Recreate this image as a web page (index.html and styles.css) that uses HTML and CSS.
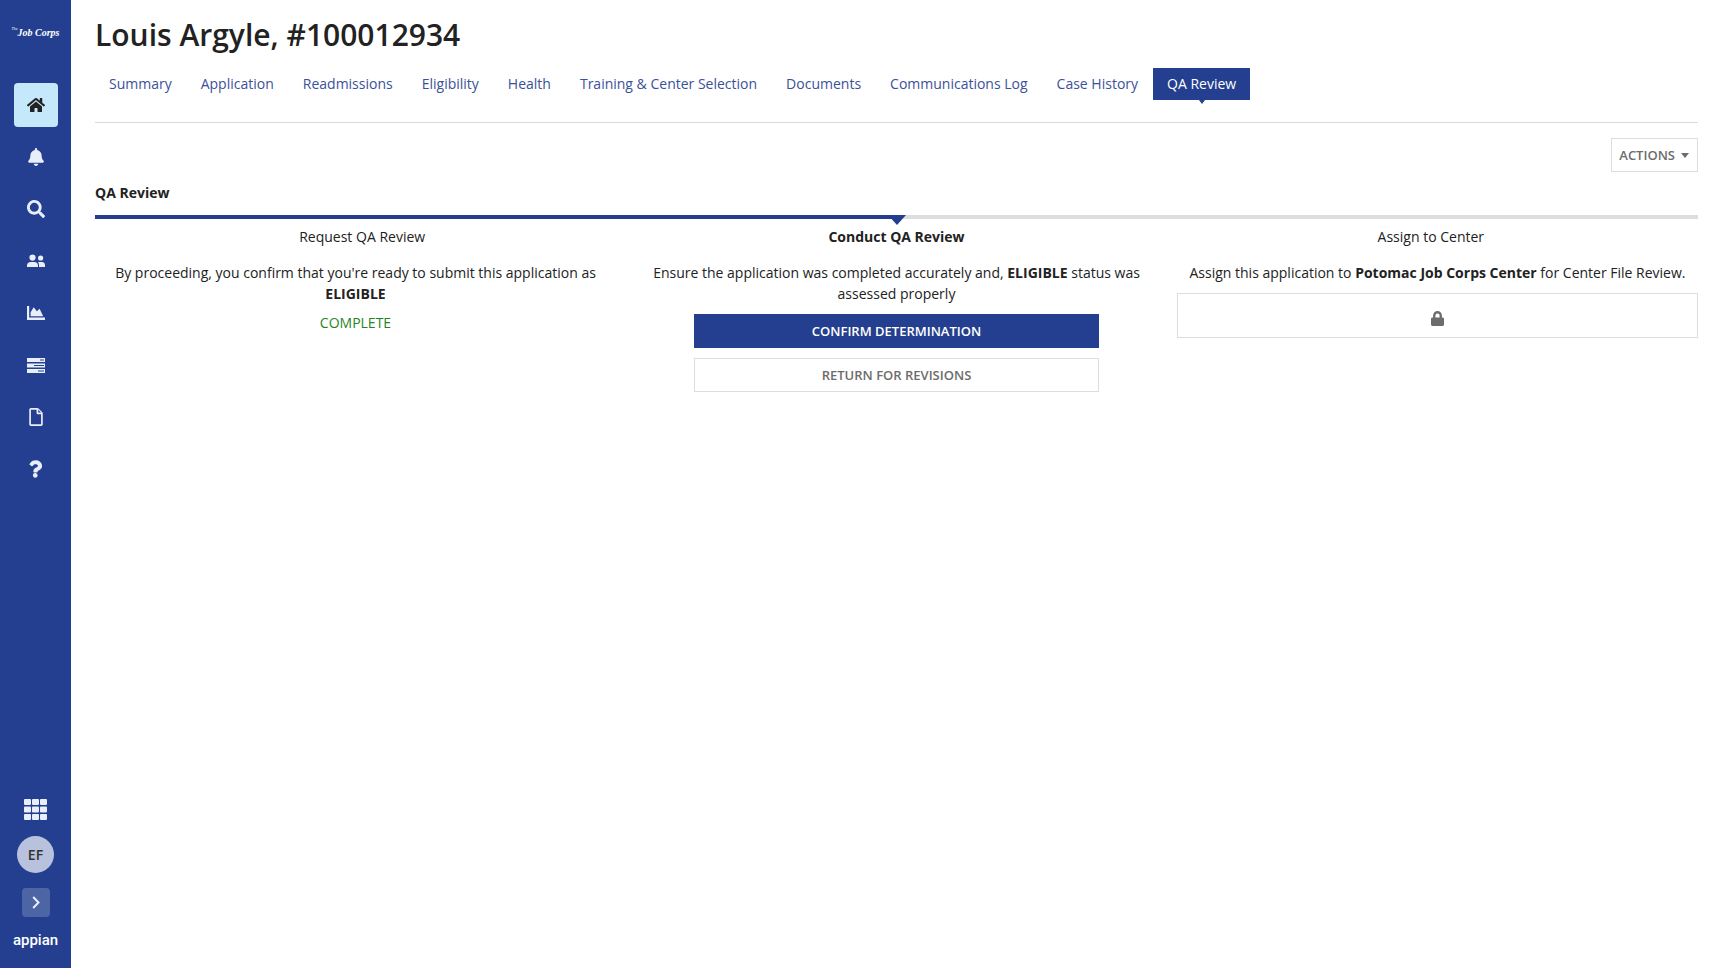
FILE: index.html
```html
<!DOCTYPE html>
<html lang="en">
<head>
  <meta charset="UTF-8">
  <meta name="viewport" content="width=device-width, initial-scale=1.0">
  <title>Louis Argyle, #100012934</title>
  <link rel="stylesheet" href="styles.css">
</head>
<body>
  <!-- Sidebar -->
  <aside class="sidebar">
    <a class="logo" href="#"><span class="logo-the">The</span>Job Corps</a>

    <nav class="side-nav" aria-label="Site">
      <a class="side-link active" href="#" aria-label="Home">
        <svg width="18" height="16" viewBox="0 0 576 512"><path d="M280 148L96 300v164a16 16 0 0 0 16 16l112-1a16 16 0 0 0 16-16v-95a16 16 0 0 1 16-16h64a16 16 0 0 1 16 16v95a16 16 0 0 0 16 16l112 1a16 16 0 0 0 16-16V300L296 148a12 12 0 0 0-16 0zM572 251l-84-69V44a12 12 0 0 0-12-12h-56a12 12 0 0 0-12 12v72l-89-74a48 48 0 0 0-61 0L4 251a12 12 0 0 0-2 17l26 31a12 12 0 0 0 17 2l235-194a12 12 0 0 1 16 0l235 194a12 12 0 0 0 17-2l26-31a12 12 0 0 0-2-17z"/></svg>
      </a>
      <a class="side-link" href="#" aria-label="Notifications">
        <svg width="16" height="18" viewBox="0 0 448 512"><path d="M224 512c35 0 64-29 64-64H160c0 35 29 64 64 64zm215-150c-19-20-55-51-55-154 0-77-54-139-128-154V32a32 32 0 1 0-64 0v22C118 69 64 131 64 208c0 103-36 134-55 154-6 6-9 14-9 22 0 16 13 32 32 32h384c19 0 32-16 32-32 0-8-3-16-9-22z"/></svg>
      </a>
      <a class="side-link" href="#" aria-label="Search">
        <svg width="18" height="18" viewBox="0 0 512 512"><path d="M505 443L405 343c-4-4-11-7-17-7h-16a208 208 0 1 0-36 36v16c0 6 3 13 7 17l100 100c9 9 24 9 34 0l28-28c9-10 9-25 0-34zM208 336a128 128 0 1 1 0-256 128 128 0 0 1 0 256z"/></svg>
      </a>
      <a class="side-link" href="#" aria-label="People">
        <svg width="18" height="14" viewBox="0 0 18 14"><circle cx="5.5" cy="3.6" r="3.1"/><circle cx="13.6" cy="4" r="2.6"/><path d="M0 13v-1.6C0 9.300 1.600 8 3.600 8h3.800c2 0 3.600 1.300 3.600 3.400V13zM12 13v-2c0-1.100-.4-2-1-2.700.4-.2.900-.3 1.400-.3h2.500C16.700 8 18 9.300 18 11v2z"/></svg>
      </a>
      <a class="side-link" href="#" aria-label="Reports">
        <svg width="18" height="14" viewBox="0 0 18 14"><path d="M0 0h2.200v11.600H18V14H0zM3.600 10.300V6.200L6.700 1.300l3.200 4 2.700-2.500 3.600 7.500z"/></svg>
      </a>
      <a class="side-link" href="#" aria-label="Tasks">
        <svg width="18" height="15" viewBox="0 0 18 15"><path fill-rule="evenodd" d="M0 0h18v4H0zM13 1.500v1h4v-1zM0 5.500h18v4H0zM7 7v1h10V7zM0 11h18v4H0zM11 12.500v1h6v-1z"/></svg>
      </a>
      <a class="side-link" href="#" aria-label="Documents">
        <svg width="14" height="18" viewBox="0 0 384 512"><path d="M370 120L264 14c-9-9-21-14-34-14H48C22 0 0 22 0 48v416c0 27 22 48 48 48h288c27 0 48-21 48-48V154c0-13-5-25-14-34zm-38 8h-76V52zM48 464V48h160v104c0 13 11 24 24 24h104v288z"/></svg>
      </a>
      <a class="side-link" href="#" aria-label="Help">
        <svg width="13" height="18" viewBox="0 0 384 512"><path d="M203 0C117 0 62 35 18 98c-8 12-5 27 6 36l47 35c11 9 27 7 36-4 27-33 47-53 88-53 32 0 71 20 71 51 0 23-19 35-51 52-37 21-86 47-86 112v11c0 13 11 24 24 24h78c13 0 24-11 24-24v-4c0-45 132-47 132-169C387 72 291 0 203 0zm-10 373a70 70 0 1 0 0 139 70 70 0 0 0 0-139z"/></svg>
      </a>
    </nav>

    <div class="side-bottom">
      <button class="apps" aria-label="Applications">
        <svg width="23" height="21" viewBox="0 0 23 21"><path d="M1 0h5q1 0 1 1v4q0 1-1 1H1Q0 6 0 5V1Q0 0 1 0zM9 0h5q1 0 1 1v4q0 1-1 1H9Q8 6 8 5V1Q8 0 9 0zM17 0h5q1 0 1 1v4q0 1-1 1h-5q-1 0-1-1V1q0-1 1-1zM1 7.500h5q1 0 1 1v4q0 1-1 1H1q-1 0-1-1v-4q0-1 1-1zM9 7.500h5q1 0 1 1v4q0 1-1 1H9q-1 0-1-1v-4q0-1 1-1zM17 7.500h5q1 0 1 1v4q0 1-1 1h-5q-1 0-1-1v-4q0-1 1-1zM1 15h5q1 0 1 1v4q0 1-1 1H1q-1 0-1-1v-4q0-1 1-1zM9 15h5q1 0 1 1v4q0 1-1 1H9q-1 0-1-1v-4q0-1 1-1zM17 15h5q1 0 1 1v4q0 1-1 1h-5q-1 0-1-1v-4q0-1 1-1z"/></svg>
      </button>
      <button class="avatar">EF</button>
      <button class="expand" aria-label="Expand">
        <svg width="8" height="13" viewBox="0 0 8 13"><path d="M1.200 1l5.300 5.500L1.200 12" fill="none" stroke="#e9eefb" stroke-width="2"/></svg>
      </button>
      <a class="brand" href="#">appian</a>
    </div>
  </aside>

  <main class="content">
    <h1>Louis Argyle, #100012934</h1>

    <nav class="tabs" aria-label="Record">
      <a href="#">Summary</a>
      <a href="#">Application</a>
      <a href="#">Readmissions</a>
      <a href="#">Eligibility</a>
      <a href="#">Health</a>
      <a href="#">Training &amp; Center Selection</a>
      <a href="#">Documents</a>
      <a href="#">Communications Log</a>
      <a href="#">Case History</a>
      <a href="#" class="selected" aria-current="page">QA Review</a>
    </nav>

    <div class="toolbar">
      <button class="btn btn-actions">ACTIONS <span class="caret"></span></button>
    </div>

    <h2>QA Review</h2>

    <!-- Milestones -->
    <div class="progress"><div class="progress-fill"></div></div>
    <ol class="milestones">
      <li>Request QA Review</li>
      <li class="current">Conduct QA Review</li>
      <li>Assign to Center</li>
    </ol>

    <div class="steps">
      <section>
        <p>By proceeding, you confirm that you're ready to submit this application as <strong>ELIGIBLE</strong></p>
        <p class="complete">COMPLETE</p>
      </section>
      <section>
        <p>Ensure the application was completed accurately and, <strong>ELIGIBLE</strong> status was assessed properly</p>
        <div class="step-buttons">
          <button class="btn btn-primary">CONFIRM DETERMINATION</button>
          <button class="btn">RETURN FOR REVISIONS</button>
        </div>
      </section>
      <section>
        <p>Assign this application to <strong>Potomac Job Corps Center</strong> for Center File Review.</p>
        <div class="locked">
          <svg width="13" height="15" viewBox="0 0 448 512" role="img" aria-label="Locked"><path d="M400 224h-24v-72C376 68 308 0 224 0S72 68 72 152v72H48c-27 0-48 22-48 48v192c0 27 21 48 48 48h352c27 0 48-21 48-48V272c0-26-21-48-48-48zm-104 0H152v-72a72 72 0 1 1 144 0z"/></svg>
        </div>
      </section>
    </div>
  </main>
</body>
</html>
```
FILE: styles.css
```css
* { box-sizing: border-box; }
body { display: flex; min-height: 100vh; margin: 0; font: 14px/21px "Open Sans", sans-serif; color: #222; background: #fff; }
a { text-decoration: none; }
button { font-family: inherit; cursor: pointer; }
svg { display: block; }

/* Sidebar */
.sidebar { flex: none; width: 71px; display: flex; flex-direction: column; align-items: center; background: #243f8f; }
.logo { margin-top: 25px; font: italic bold 10px/16px "Liberation Serif", serif; color: #fff; white-space: nowrap; }
.logo-the { font-size: 4px; font-weight: normal; vertical-align: top; line-height: 8px; }
.side-nav { display: flex; flex-direction: column; gap: 8px; margin-top: 42px; }
.side-link { display: flex; align-items: center; justify-content: center; width: 44px; height: 44px; border-radius: 4px; fill: #e9eefb; }
.side-link.active { background: #c5e9fb; fill: #222; }
.side-bottom { display: flex; flex-direction: column; align-items: center; margin-top: auto; padding-bottom: 17px; }
.side-bottom button { display: flex; align-items: center; justify-content: center; padding: 0; border: 0; }
.apps { background: none; fill: #e9eefb; }
.side-bottom .avatar { width: 37px; height: 37px; margin-top: 16px; border-radius: 50%; background: #b9c2dd; color: #333; font-size: 14px; font-weight: 600; }
.side-bottom .expand { width: 28px; height: 29px; margin: 15px 0 12px; border-radius: 4px; background: #4d64a5; }
.brand { color: #fff; font: 500 15px/22px Roboto, sans-serif; }

/* Record header */
.content { flex: 1; min-width: 0; padding: 15px 24px 24px; }
h1 { margin: 0; font-size: 30px; font-weight: 600; line-height: 40px; }
.tabs { display: flex; flex-wrap: wrap; column-gap: 1px; margin-top: 13px; padding-bottom: 22px; border-bottom: 1px solid #d9d9d9; }
.tabs a { position: relative; padding: 5px 14px 6px; color: #3b5199; }
.tabs a.selected { background: #243f8f; color: #fff; }
.tabs a.selected::after { content: ""; position: absolute; top: 100%; left: 50%; margin-left: -3px; border: 3px solid transparent; border-top: 4px solid #243f8f; border-bottom: 0; }

/* Buttons */
.btn { height: 34px; padding: 0 7px; border: 1px solid #ddd; background: #fff; color: #6c6c6c; font-size: 13px; font-weight: 600; }
.btn-primary { border-color: #243f8f; background: #243f8f; color: #fff; }
.toolbar { display: flex; justify-content: flex-end; margin-top: 15px; }
.btn-actions { display: flex; align-items: center; gap: 6px; }
.caret { border: 4px solid transparent; border-top: 5px solid #6c6c6c; border-bottom: 0; margin-right: 1px; }

/* Milestones */
h2 { margin: 10px 0 12px; font-size: 14px; font-weight: 700; line-height: 21px; }
.progress { height: 4px; background: #ddd; }
.progress-fill { position: relative; width: 50%; height: 4px; background: #243f8f; }
.progress-fill::after { content: ""; position: absolute; top: 0; right: -9px; border: 9px solid transparent; border-top: 10px solid #243f8f; border-bottom: 0; }
.milestones { display: grid; grid-template-columns: repeat(3, 1fr); margin: 7px 0 15px; padding: 0; list-style: none; text-align: center; }
.milestones .current { font-weight: 700; }
.steps { display: grid; grid-template-columns: repeat(3, 1fr); gap: 20px; text-align: center; }
.steps p { margin: 0 0 8px; }
.steps .complete { color: #1f861f; }
.step-buttons { display: flex; flex-direction: column; gap: 10px; margin-top: 10px; padding: 0 58px; }
.locked { display: flex; align-items: center; justify-content: center; height: 45px; margin-top: 10px; padding-top: 5px; border: 1px solid #ddd; fill: #6c6c6c; }
```
